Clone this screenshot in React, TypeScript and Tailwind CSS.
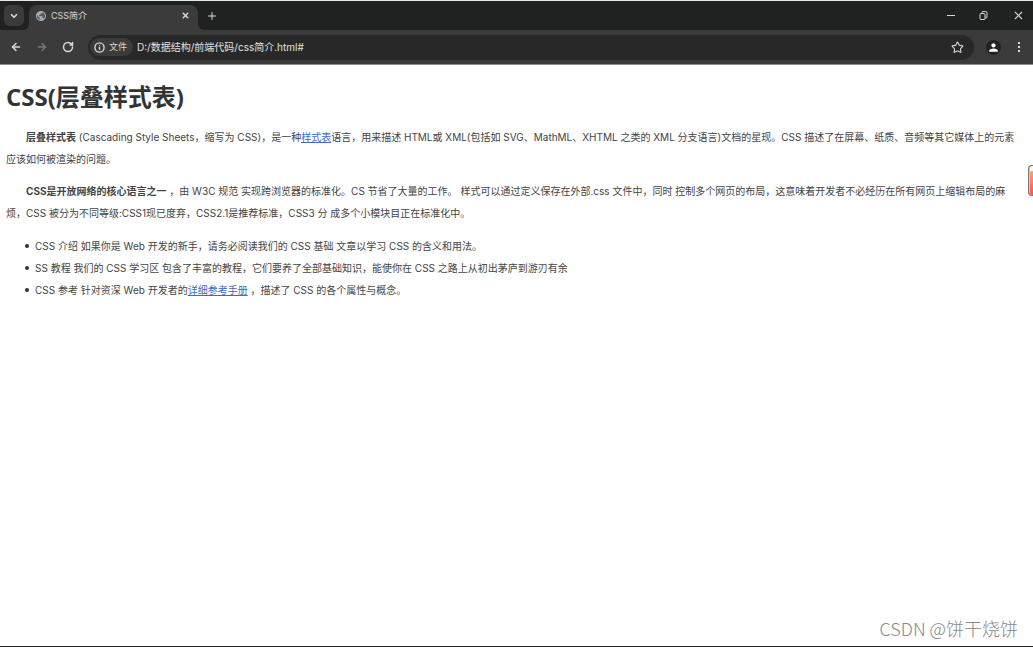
import { ArrowLeft, ArrowRight, ChevronDown, Info, Plus, RotateCw, Star, X } from "lucide-react";
import { MdPerson, MdPublic } from "react-icons/md";

function TabStrip() {
  return (
    <div className="flex h-[30px] items-end border-t border-[#e4eae2] bg-[#1f2221] text-[#d8d8d8]">
      <button type="button" aria-label="Search tabs" className="mb-1 ml-1 flex h-[21px] w-5 items-center justify-center rounded-md bg-[#3b3b3b]">
        <ChevronDown size={10} strokeWidth={4} />
      </button>

      {/* Active tab, with the curved feet on both sides */}
      <div className="ml-[5px] flex h-[25px] items-end">
        <div className="relative flex h-[25px] w-[169px] items-center rounded-t-lg bg-[#3b3b3b] pr-2 pb-1 pl-1.5">
          <svg className="absolute bottom-0 -left-1.5" width="6" height="6" aria-hidden="true">
            <path d="M6 0A6 6 0 0 1 0 6H6Z" fill="#3b3b3b" />
          </svg>
          <svg className="absolute -right-1.5 bottom-0" width="6" height="6" aria-hidden="true">
            <path d="M0 0A6 6 0 0 0 6 6H0Z" fill="#3b3b3b" />
          </svg>
          <svg className="size-3" viewBox="0 0 24 24" aria-hidden="true">
            <circle cx="12" cy="12" r="9" fill="#55585d" />
            <MdPublic size={24} className="text-[#a7acb4]" />
          </svg>
          <span className="ml-1 flex-1 text-[9px] leading-4">CSS简介</span>
          <button type="button" aria-label="Close tab">
            <X size={9} strokeWidth={4} />
          </button>
        </div>
      </div>

      <button type="button" aria-label="New tab" className="ml-2 flex h-[29px] w-3 items-center justify-center">
        <Plus size={12} strokeWidth={2} />
      </button>

      <div className="ml-auto flex h-[29px] items-center gap-6 pr-2">
        <button type="button" aria-label="Minimize">
          <svg width="8" height="9" viewBox="0 0 8 9" stroke="currentColor">
            <path d="M0 4.5H8" />
          </svg>
        </button>
        <button type="button" aria-label="Restore">
          <svg width="9" height="9" viewBox="0 0 9 9" fill="none" stroke="currentColor">
            <rect x="1" y="2.5" width="5" height="6" rx="1" />
            <path d="M3 2.5V1.5Q3 .5 4 .5H6.5Q8 .5 8 2V6Q8 7 7 7H6" />
          </svg>
        </button>
        <button type="button" aria-label="Close">
          <X size={13} strokeWidth={2} />
        </button>
      </div>
    </div>
  );
}

function Toolbar() {
  return (
    <div className="flex h-[35px] items-center border-b border-[#8d8d8d] bg-[#3b3b3b] pr-2 pl-2.5 text-[#d8d8d8]">
      <div className="flex items-center gap-3.5">
        <button type="button" aria-label="Back">
          <ArrowLeft size={12} strokeWidth={3} />
        </button>
        <button type="button" aria-label="Forward" className="text-[#777777]">
          <ArrowRight size={12} strokeWidth={3} />
        </button>
        <button type="button" aria-label="Reload">
          <RotateCw size={12} strokeWidth={3} />
        </button>
      </div>

      <div className="ml-3.5 flex h-[25px] flex-1 items-center rounded-full bg-[#282828] pr-2.5 pl-0.5">
        <button type="button" className="flex h-[18px] items-center gap-1 rounded-full bg-[#3b3b3b] pr-1.5 pl-1">
          <Info size={11} strokeWidth={3} />
          <span className="text-[9px] leading-4">文件</span>
        </button>
        <input
          type="text"
          aria-label="Address"
          defaultValue="D:/数据结构/前端代码/css简介.html#"
          className="ml-1 min-w-0 flex-1 bg-transparent text-[10px] leading-4 text-[#e3e3e3] outline-none"
        />
        <button type="button" aria-label="Bookmark this page">
          <Star size={13} strokeWidth={2} />
        </button>
      </div>

      <button type="button" aria-label="Profile" className="ml-3 flex size-[15px] items-center justify-center rounded-full bg-[#1f2221] text-white">
        <MdPerson size={13} />
      </button>
      <button type="button" aria-label="Menu" className="ml-3 flex h-4 w-3 items-center justify-center">
        <svg width="2" height="10" viewBox="0 0 2 10" fill="currentColor">
          <rect width="2" height="2" />
          <rect y="4" width="2" height="2" />
          <rect y="8" width="2" height="2" />
        </svg>
      </button>
    </div>
  );
}

export default function App() {
  const linkClass = "text-[#4169c4] underline";
  const itemClass = "relative before:absolute before:top-[9px] before:-left-2.5 before:size-1 before:rounded-full before:bg-[#333333]";

  return (
    <div className="relative flex min-h-screen flex-col overflow-hidden border-b border-[#1f2221] bg-white font-['Inter','Noto_Sans_CJK_SC',sans-serif]">
      <TabStrip />
      <Toolbar />

      <main className="flex-1 px-1.5 pt-4 text-[10px] leading-[22px] text-[#444444]">
        <h1 className="font-['Open_Sans','Noto_Sans_CJK_SC',sans-serif] text-[24px] leading-8 font-bold text-[#333333]">CSS(层叠样式表)</h1>

        <p className="mt-[13px] indent-5">
          <strong>层叠样式表</strong> (Cascading Style Sheets，缩写为 CSS)，是一种
          <a href="#" className={linkClass}>样式表</a>
          语言，用来描述 HTML或 XML(包括如 SVG、MathML、XHTML 之类的 XML 分支语言)文档的星现。CSS 描述了在屏幕、纸质、音频等其它媒体上的元素
          <br />
          应该如何被渲染的问题。
        </p>

        <p className="mt-2.5 indent-5">
          <strong>CSS是开放网络的核心语言之一</strong> ，由 W3C 规范 实现跨浏览器的标准化。CS 节省了大量的工作。 样式可以通过定义保存在外部.css 文件中，同时 控制多个网页的布局，这意味着开发者不必经历在所有网页上缩辑布局的麻
          <br />
          烦，CSS 被分为不同等级:CSS1现已度弃，CSS2.1是推荐标准，CSS3 分 成多个小模块目正在标准化中。
        </p>

        <ul className="mt-[11px] pl-[29px]">
          <li className={itemClass}>CSS 介绍 如果你是 Web 开发的新手，请务必阅读我们的 CSS 基础 文章以学习 CSS 的含义和用法。</li>
          <li className={itemClass}>SS 教程 我们的 CSS 学习区 包含了丰富的教程，它们要养了全部基础知识，能使你在 CSS 之路上从初出茅庐到游刃有余</li>
          <li className={itemClass}>
            CSS 参考 针对资深 Web 开发者的
            <a href="#" className={linkClass}>详细参考手册</a>
            {" "}，描述了 CSS 的各个属性与概念。
          </li>
        </ul>
      </main>

      {/* Floating widget docked half outside the right edge */}
      <div className="absolute top-[165px] right-0 h-[31px] w-[5px] rounded-l-sm border border-r-0 border-[#777777] bg-linear-to-b from-white from-15% via-[#f4a071] via-20% to-[#ff4d4d] shadow-[inset_1px_0_0_#d0d0d0]" />

      <span className="absolute right-[15px] bottom-1 font-['Noto_Sans_CJK_SC',sans-serif] text-[18px] leading-7 font-light text-[#888888]">
        CSDN @饼干烧饼
      </span>
    </div>
  );
}
